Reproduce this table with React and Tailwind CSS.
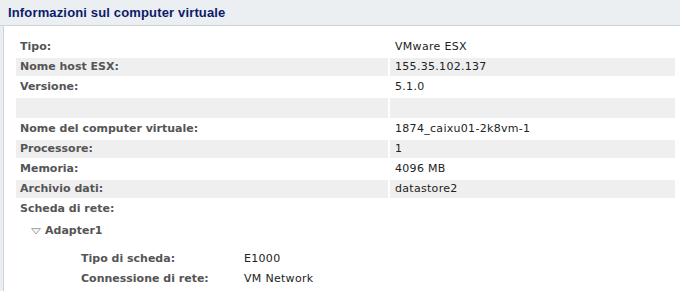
const rows = [
  { label: 'Tipo:', value: 'VMware ESX' },
  { label: 'Nome host ESX:', value: '155.35.102.137' },
  { label: 'Versione:', value: '5.1.0' },
  { label: '', value: '', spacer: true },
  { label: 'Nome del computer virtuale:', value: '1874_caixu01-2k8vm-1' },
  { label: 'Processore:', value: '1' },
  { label: 'Memoria:', value: '4096 MB' },
  { label: 'Archivio dati:', value: 'datastore2' },
];

const adapterRows = [
  { label: 'Tipo di scheda:', value: 'E1000' },
  { label: 'Connessione di rete:', value: 'VM Network' },
];

const Triangle = () => (
  <svg width="10" height="7" viewBox="0 0 10 7" className="shrink-0">
    <path d="M0.5 0.5 H9.5 L5 6 Z" fill="#f2f2f2" stroke="#a8a8a8" strokeWidth="1" />
  </svg>
);

export default function App() {
  return (
    <div className="w-[680px] h-[291px] overflow-hidden bg-[#eceff2] font-['DejaVu_Sans',sans-serif]">
      <div className="h-[26px] border-b border-[#cfd4da] flex items-center pl-2">
        <h1 className="font-['Liberation_Sans',sans-serif] text-[13px] font-bold tracking-[0.15px] text-[#0b1b6b]">Informazioni sul computer virtuale</h1>
      </div>
      <div className="ml-[3px] h-[265px] border-l border-[#cfd4da] bg-white pt-[12px] pl-[12px]">
        <div className="grid grid-cols-[372px_285px] gap-[2px] text-[11px]">
          {rows.map((r, i) => (
            <div key={i} className="contents">
              <div
                className={`${r.spacer ? 'h-[20px]' : 'h-[18px]'} ${i % 2 === 1 ? 'bg-[#efefef]' : ''} pl-[4px] flex items-center font-bold text-[#555]`}
              >
                {r.label}
              </div>
              <div
                className={`${r.spacer ? 'h-[20px]' : 'h-[18px]'} ${i % 2 === 1 ? 'bg-[#efefef]' : ''} pl-[5px] flex items-center text-[#222] tracking-[0.3px]`}
              >
                {r.value}
              </div>
            </div>
          ))}
          <div className="h-[18px] pl-[4px] flex items-center font-bold text-[#555]">Scheda di rete:</div>
          <div className="h-[18px]" />
        </div>
        <div className="mt-[4px] h-[18px] flex items-center gap-[4px] pl-[15px] text-[11px] font-bold text-[#555]">
          <Triangle />
          <span>Adapter1</span>
        </div>
        <div className="mt-[10px] pl-[65px] flex flex-col gap-[2px] text-[11px]">
          {adapterRows.map((r) => (
            <div key={r.label} className="h-[18px] flex items-center">
              <span className="w-[163px] font-bold text-[#555]">{r.label}</span>
              <span className="text-[#222] tracking-[0.3px]">{r.value}</span>
            </div>
          ))}
        </div>
      </div>
    </div>
  );
}
